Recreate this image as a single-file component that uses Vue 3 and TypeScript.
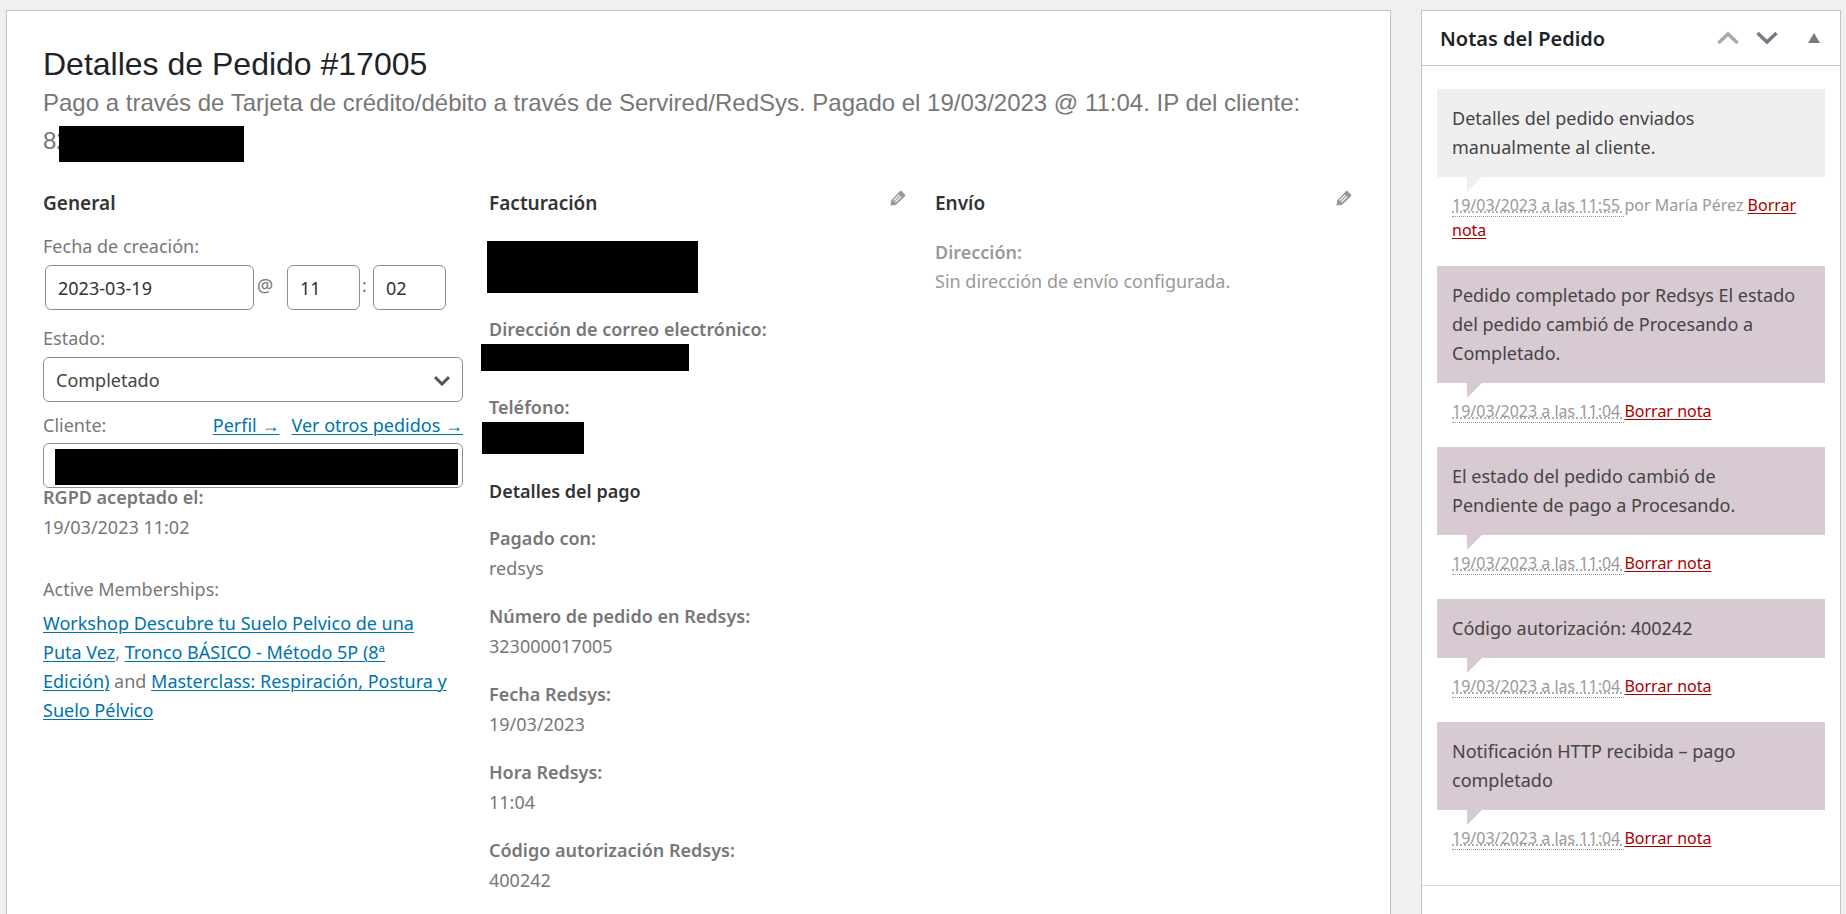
<script setup lang="ts">
import { ref } from 'vue'

interface Field {
  label: string
  value: string
}

interface Note {
  id: number
  text: string
  date: string
  author?: string
  system: boolean
}

const orderDate = ref('2023-03-19')
const orderHour = ref('11')
const orderMinute = ref('02')
const status = ref('completed')

const payment: Field[] = [
  { label: 'Pagado con:', value: 'redsys' },
  { label: 'Número de pedido en Redsys:', value: '323000017005' },
  { label: 'Fecha Redsys:', value: '19/03/2023' },
  { label: 'Hora Redsys:', value: '11:04' },
  { label: 'Código autorización Redsys:', value: '400242' },
]

const notes: Note[] = [
  { id: 1, text: 'Detalles del pedido enviados manualmente al cliente.', date: '19/03/2023 a las 11:55', author: 'María Pérez', system: false },
  { id: 2, text: 'Pedido completado por Redsys El estado del pedido cambió de Procesando a Completado.', date: '19/03/2023 a las 11:04', system: true },
  { id: 3, text: 'El estado del pedido cambió de Pendiente de pago a Procesando.', date: '19/03/2023 a las 11:04', system: true },
  { id: 4, text: 'Código autorización: 400242', date: '19/03/2023 a las 11:04', system: true },
  { id: 5, text: 'Notificación HTTP recibida – pago completado', date: '19/03/2023 a las 11:04', system: true },
]
</script>

<template>
  <div class="page">
    <main class="panel order">
      <h1>Detalles de Pedido #17005</h1>
      <p class="summary">
        Pago a través de Tarjeta de crédito/débito a través de Servired/RedSys. Pagado el 19/03/2023 @ 11:04. IP del cliente:
        <span class="ip">82<span class="mask mask-ip"></span></span>
      </p>

      <div class="columns">
        <section class="column">
          <h2>General</h2>

          <label class="label date-label" for="order-date">Fecha de creación:</label>
          <div class="date-row">
            <input id="order-date" v-model="orderDate" class="box date" type="text" />
            <span class="at">@</span>
            <input v-model="orderHour" class="box time" type="text" aria-label="Hora" />
            <span class="colon">:</span>
            <input v-model="orderMinute" class="box time" type="text" aria-label="Minuto" />
          </div>

          <label class="label status-label" for="order-status">Estado:</label>
          <div class="select-wrap">
            <select id="order-status" v-model="status" class="box wide">
              <option value="completed">Completado</option>
            </select>
            <svg class="arrow" viewBox="0 0 16 10" aria-hidden="true">
              <path d="M1 1.200 8 8 15 1.200" fill="none" stroke="#50575e" stroke-width="3" />
            </svg>
          </div>

          <div class="customer-head">
            <label class="label" for="customer">Cliente:</label>
            <span class="customer-links">
              <a href="#perfil">Perfil →</a>
              <a href="#pedidos">Ver otros pedidos →</a>
            </span>
          </div>
          <div class="select-wrap customer">
            <select id="customer" class="box wide"></select>
            <span class="mask mask-customer"></span>
          </div>

          <p class="field gdpr"><strong>RGPD aceptado el:</strong>19/03/2023 11:02</p>

          <p class="label members-label">Active Memberships:</p>
          <p class="members">
            <a href="#workshop">Workshop Descubre tu Suelo Pelvico de una Puta Vez</a>,
            <a href="#tronco">Tronco BÁSICO - Método 5P (8ª Edición)</a> and
            <a href="#masterclass">Masterclass: Respiración, Postura y Suelo Pélvico</a>
          </p>
        </section>

        <section class="column">
          <div class="column-head">
            <h2>Facturación</h2>
            <button class="edit" type="button" aria-label="Editar facturación">
              <svg viewBox="0 0 16 16" aria-hidden="true">
                <path fill="#999" fill-rule="evenodd" d="M11 .5 15.500 5 14.600 6.800 5.800 15 .5 15.500 1.200 10.200 9.600 1.600ZM8.900 4.400 3.200 10.100 4 10.900 9.700 5.200ZM10.600 6.100 4.900 11.800 5.700 12.600 11.400 6.900Z" />
              </svg>
            </button>
          </div>
          <div class="mask mask-address"></div>
          <p class="field masked"><strong>Dirección de correo electrónico:</strong></p>
          <div class="mask mask-email"></div>
          <p class="field masked"><strong>Teléfono:</strong></p>
          <div class="mask mask-phone"></div>

          <h3>Detalles del pago</h3>
          <div class="payment">
            <p v-for="item in payment" :key="item.label" class="field">
              <strong>{{ item.label }}</strong>{{ item.value }}
            </p>
          </div>
        </section>

        <section class="column">
          <div class="column-head">
            <h2>Envío</h2>
            <button class="edit" type="button" aria-label="Editar envío">
              <svg viewBox="0 0 16 16" aria-hidden="true">
                <path fill="#999" fill-rule="evenodd" d="M11 .5 15.500 5 14.600 6.800 5.800 15 .5 15.500 1.200 10.200 9.600 1.600ZM8.900 4.400 3.200 10.100 4 10.900 9.700 5.200ZM10.600 6.100 4.900 11.800 5.700 12.600 11.400 6.900Z" />
              </svg>
            </button>
          </div>
          <p class="field shipping"><strong>Dirección:</strong>Sin dirección de envío configurada.</p>
        </section>
      </div>
    </main>

    <aside class="panel notes">
      <header class="notes-head">
        <h2>Notas del Pedido</h2>
        <button class="move up" type="button" aria-label="Subir">
          <svg viewBox="0 0 22 14" aria-hidden="true">
            <path d="M1.500 12 11 3 20.500 12" fill="none" stroke="#a7aaad" stroke-width="3.500" />
          </svg>
        </button>
        <button class="move down" type="button" aria-label="Bajar">
          <svg viewBox="0 0 22 14" aria-hidden="true">
            <path d="M1.500 2 11 11 20.500 2" fill="none" stroke="#787c82" stroke-width="3.500" />
          </svg>
        </button>
        <button class="toggle" type="button" aria-label="Alternar panel">
          <svg viewBox="0 0 12 10" aria-hidden="true">
            <path d="M6 0 12 10H0Z" fill="#787c82" />
          </svg>
        </button>
      </header>

      <ul class="note-list">
        <li v-for="note in notes" :key="note.id" :class="{ system: note.system }">
          <div class="note">{{ note.text }}</div>
          <p class="meta">
            <abbr>{{ note.date }}&nbsp;</abbr><template v-if="note.author">{{ `por ${note.author} ` }}</template><a href="#borrar">Borrar nota</a>
          </p>
        </li>
      </ul>
    </aside>
  </div>
</template>

<style>
body {
  margin: 0;
  background: #f0f0f1;
}
</style>

<style scoped>
.page {
  box-sizing: border-box;
  display: grid;
  grid-template-columns: minmax(0, 1fr) 420px;
  gap: 30px;
  min-height: 100vh;
  padding: 10px 5px 0 6px;
  color: #777;
  font-family: 'Noto Sans', 'Open Sans', sans-serif;
  font-size: 18px;
  line-height: 30px;
}

.panel {
  box-sizing: border-box;
  background: #fff;
  border: 1px solid #c3c4c7;
  border-bottom: 0;
}

h1,
h2,
h3,
p,
ul {
  margin: 0;
  padding: 0;
}

a {
  color: #0073aa;
  text-underline-offset: 2px;
  text-decoration-thickness: 1px;
}

.order {
  padding: 34px 35px 0 36px;
}

h1 {
  color: #1d2327;
  font: 400 32px/38px 'Liberation Sans', Arial, sans-serif;
}

.summary {
  margin-top: 1px;
  font: 400 24px/38px 'Liberation Sans', Arial, sans-serif;
}

.ip {
  position: relative;
  display: inline-block;
  width: 201px;
}

.mask {
  display: block;
  background: #000;
}

.mask-ip {
  position: absolute;
  top: 4px;
  left: 16px;
  width: 185px;
  height: 36px;
}

.columns {
  display: grid;
  grid-template-columns: repeat(3, minmax(0, 1fr));
  gap: 26px;
  margin-top: 28px;
}

h2,
h3 {
  color: #333;
  font-size: 19px;
  font-weight: 600;
  line-height: 30px;
}

.column-head {
  display: flex;
  align-items: flex-start;
  justify-content: space-between;
}

button {
  padding: 0;
  background: none;
  border: 0;
}

svg {
  display: block;
}

.edit {
  width: 16px;
  margin: 2px 3px 0 0;
}

.label {
  display: block;
}

.date-label {
  margin-top: 13px;
}

.box {
  box-sizing: border-box;
  height: 45px;
  padding: 0 12px;
  color: #2c3338;
  font: inherit;
  background: #fff;
  border: 1px solid #8c8f94;
  border-radius: 6px;
}

.date-row {
  display: flex;
  margin: 4px 0 0 2px;
}

.date {
  width: 209px;
}

.time {
  width: 73px;
}

.at,
.colon {
  line-height: 40px;
}

.at {
  width: 30px;
  margin-left: 3px;
}

.colon {
  width: 13px;
  text-indent: 2px;
}

.status-label {
  margin-top: 13px;
}

.select-wrap {
  position: relative;
  margin-top: 4px;
}

.customer {
  margin-top: 3px;
}

.wide {
  display: block;
  width: 100%;
  color: #444;
  appearance: none;
}

.arrow {
  position: absolute;
  top: 19px;
  right: 13px;
  width: 16px;
  height: 10px;
}

.customer-head {
  display: flex;
  justify-content: space-between;
  margin-top: 8px;
}

.customer-links {
  display: flex;
  gap: 12px;
}

.mask-customer {
  position: absolute;
  inset: 6px 5px 3px 12px;
}

.field strong {
  display: block;
  font-weight: 600;
}

.gdpr {
  margin-top: -6px;
}

.members-label {
  margin-top: 32px;
}

.members {
  margin-top: 5px;
  padding-right: 8px;
  line-height: 29px;
}

.mask-address {
  width: 211px;
  height: 52px;
  margin: 23px 0 0 -2px;
}

.masked {
  margin-top: 21px;
}

.mask-email {
  width: 208px;
  height: 27px;
  margin-left: -8px;
}

.mask-phone {
  width: 102px;
  height: 32px;
  margin-left: -7px;
}

h3 {
  margin-top: 22px;
  font-size: 18px;
}

.payment {
  display: grid;
  gap: 18px;
  margin-top: 17px;
}

.shipping {
  margin-top: 20px;
  color: #999;
  line-height: 29px;
}

.notes-head {
  display: flex;
  align-items: center;
  height: 54px;
  padding: 0 20px 0 18px;
  border-bottom: 1px solid #c3c4c7;
}

.notes-head h2 {
  flex: 1;
  padding-top: 2px;
  color: #1d2327;
  font-size: 20px;
}

.move {
  width: 22px;
}

.down {
  margin: 0 30px 0 17px;
}

.toggle {
  width: 12px;
}

.note-list {
  padding: 23px 15px 11px;
  list-style: none;
  border-bottom: 1px solid #dcdcde;
}

.note {
  position: relative;
  padding: 15px 20px 15px 15px;
  color: #444;
  line-height: 29px;
  background: #efefef;
}

.note::after {
  position: absolute;
  top: 100%;
  left: 30px;
  width: 15px;
  height: 15px;
  background: inherit;
  clip-path: polygon(0 0, 100% 0, 0 100%);
  content: '';
}

.system .note {
  background: #d7cad2;
}

.meta {
  padding: 16px 15px 23px;
  color: #999;
  font-size: 16px;
  line-height: 25px;
}

.meta abbr {
  text-decoration: underline dotted;
  border-bottom: 1px dotted #999;
}

.meta a {
  color: #a00;
}
</style>
